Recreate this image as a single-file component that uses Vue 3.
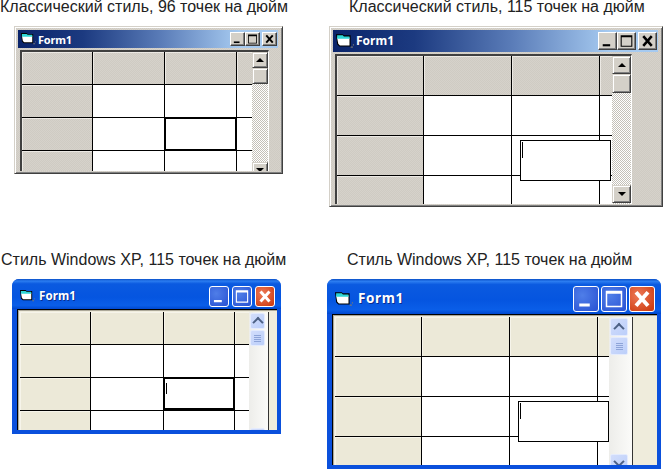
<script setup>
const windows = [
  { id: 'w1', kind: 'classic', caption: 'Классический стиль, 96 точек на дюйм',
    cols: [70, 71, 71, 15], rows: [32, 32, 32], spacer: 78,
    edit: { left: 142, top: 65, width: 73, height: 34 }, thick: true, caret: false },
  { id: 'w2', kind: 'classic', caption: 'Классический стиль, 115 точек на дюйм',
    cols: [86, 87, 87, 12], rows: [39, 39, 39], spacer: 92,
    edit: { left: 183, top: 84, width: 91, height: 41 }, thick: false, caret: true },
  { id: 'w3', kind: 'xp', caption: 'Стиль Windows XP, 115 точек на дюйм',
    cols: [70, 72, 70, 14], rows: [32, 32, 32], spacer: 81,
    edit: { left: 143, top: 65, width: 72, height: 33 }, thick: true, caret: true },
  { id: 'w4', kind: 'xp', caption: 'Стиль Windows XP, 115 точек на дюйм',
    cols: [86, 87, 87, 11], rows: [39, 39, 39], spacer: 98,
    edit: { left: 183, top: 84, width: 91, height: 41 }, thick: false, caret: true },
]

const cells = []
for (let r = 0; r < 4; r++) for (let c = 0; c < 4; c++) cells.push({ r, c, fixed: r === 0 || c === 0 })

const gridStyle = (w) => ({
  width: w.cols.reduce((a, b) => a + b, 0) + 3 + 'px',
  gridTemplateColumns: w.cols.map((v) => v + 'px').join(' '),
  gridTemplateRows: w.rows.map((v) => v + 'px').join(' ') + ' 1fr',
})
const editStyle = (w) => ({
  left: w.edit.left + 'px',
  top: w.edit.top + 'px',
  width: w.edit.width + 'px',
  height: w.edit.height + 'px',
})
</script>

<template>
  <div class="canvas">
    <section v-for="w in windows" :key="w.id" class="pane" :class="w.id">
      <p class="caption">{{ w.caption }}</p>
      <div class="win" :class="w.kind">
        <header class="title">
          <svg class="icon" viewBox="0 0 16 14">
            <path d="M13 12h2v1h-2zM15 10h1v1h-1z" fill="#777" />
            <path d="M0 1h6l1 1h6v10H3L1 10z" fill="#000" />
            <path d="M1 4h11v7H3.500L2 9.500z" fill="#fff" />
            <path d="M1 2h5l1 1h5v2H1z" fill="#2fd6d6" />
          </svg>
          <span class="name">Form1</span>
          <div class="ctrls">
            <button class="btn">
              <svg viewBox="0 0 16 14"><path d="M3.500 10h7v2h-7z" /></svg>
            </button>
            <button class="btn">
              <svg viewBox="0 0 16 14"><path fill-rule="evenodd" d="M2.500 1.500h11v11h-11zM3.500 3.500v8h9v-8z" /></svg>
            </button>
            <button class="btn close">
              <svg viewBox="0 0 16 14"><path d="M4 2.500L12 11.500M12 2.500L4 11.500" class="x" /></svg>
            </button>
          </div>
        </header>
        <div class="client">
          <div class="view">
            <div class="grid" :style="gridStyle(w)">
              <div v-for="cell in cells" :key="cell.r + '-' + cell.c" class="cell" :class="{ fixed: cell.fixed }"></div>
              <div class="edit" :class="{ thick: w.thick }" :style="editStyle(w)">
                <i v-if="w.caret" class="caret"></i>
              </div>
            </div>
            <div class="sb">
              <div class="sbtn"><span class="arrow up"></span></div>
              <div class="sbtn thumb"><span class="grip"></span></div>
              <div class="spacer" :style="{ height: w.spacer + 'px' }"></div>
              <div class="sbtn"><span class="arrow down"></span></div>
            </div>
          </div>
        </div>
      </div>
    </section>
  </div>
</template>

<style scoped>
.canvas {
  width: 663px;
  height: 469px;
  overflow: hidden;
  background: #fff;
  display: grid;
  grid-template-columns: 320px 343px;
  grid-template-rows: 253px 216px;
  font-family: "Liberation Sans", Arial, sans-serif;
}
.pane { display: flex; flex-direction: column; min-width: 0; }
.caption {
  margin: 0;
  height: 14px;
  line-height: 14px;
  font-size: 16px;
  color: #222;
  white-space: nowrap;
}
.w1 .caption { padding-left: 0; }
.w2 .caption { padding-left: 29px; }
.w3 .caption { padding-left: 1px; }
.w4 .caption { padding-left: 27px; }

.win {
  box-sizing: border-box;
  margin-top: 12px;
  display: flex;
  flex-direction: column;
  overflow: hidden;
}
.w1 .win { margin-left: 14px; width: 269px; height: 148px; --title: 18px; --bw: 15px; --bh: 14px; --sb: 16px; --sh: 16px; --fs: 11px; --ns: -0.2px; --ico: 15px; --nx: 2px; }
.w2 .win { margin-left: 9px; width: 334px; height: 181px; --title: 22px; --bw: 19px; --bh: 18px; --sb: 19px; --sh: 18px; --fs: 12px; --ns: 0; --ico: 18px; --nx: 2px; }
.w3 .win { margin-left: 12px; width: 269px; height: 155px; --title: 30px; --bw: 20px; --bh: 21px; --sb: 19px; --sh: 16px; --fs: 11.5px; --ns: 0.1px; --ico: 15px; --nx: 4px; }
.w4 .win { margin-left: 7px; width: 334px; height: 190px; --title: 35px; --bw: 26px; --bh: 26px; --sb: 23px; --sh: 18px; --fs: 13.5px; --ns: 0.6px; --ico: 18px; --nx: 5px; }

.title {
  box-sizing: border-box;
  height: var(--title);
  flex: none;
  display: flex;
  align-items: center;
  color: #fff;
}
.icon { width: var(--ico); height: calc(var(--ico) * 0.875); flex: none; }
.name {
  margin-left: var(--nx);
  font-family: "Noto Sans", "DejaVu Sans", sans-serif;
  font-weight: 700;
  font-size: var(--fs);
  letter-spacing: var(--ns);
  line-height: 1;
}
.ctrls { margin-left: auto; display: flex; }
.btn {
  box-sizing: border-box;
  width: var(--bw);
  height: var(--bh);
  padding: 0;
  display: block;
}
.btn svg { display: block; width: 100%; height: 100%; }
.x { fill: none; stroke-width: 2.4; }
.client { flex: 1; min-height: 0; display: flex; }
.view { display: flex; min-height: 0; flex: none; }
.grid {
  position: relative;
  flex: none;
  display: grid;
  gap: 1px;
  background: #000;
  overflow: hidden;
}
.cell { background: #fff; }
.edit {
  position: absolute;
  box-sizing: border-box;
  background: #fff;
  border: 1px solid #000;
}
.edit.thick { border-width: 2px; }
.caret { position: absolute; left: 1px; top: 1px; width: 1px; height: 16px; background: #000; }
.w3 .caret { top: 4px; height: 11px; }
.sb {
  box-sizing: border-box;
  flex: none;
  width: var(--sb);
  display: flex;
  flex-direction: column;
  overflow: hidden;
}
.sbtn {
  box-sizing: border-box;
  flex: none;
  height: var(--sh);
  display: flex;
  align-items: center;
  justify-content: center;
}
.w2 .thumb { height: 19px; }
.spacer { flex: none; }
.arrow { display: block; width: 0; height: 0; }

/* classic */
.classic {
  padding: 3px 4px 2px 3px;
  background: repeating-conic-gradient(#d6d2cb 0 25%, #cfcbc3 0 50%) 0 0 / 2px 2px;
  border: 1px solid;
  border-color: #d4d0c8 #404040 #404040 #d4d0c8;
  box-shadow: inset 1px 1px #fff, inset -1px -1px #808080;
}
.classic .title {
  padding: 0 1px 0 3px;
  background: linear-gradient(90deg, #0a246a, #1c3a80 25%, #5a7cb8 55%, #a6caf0 85%, #a6caf0);
}
.classic .btn {
  background: #d4d0c8;
  border: 1px solid;
  border-color: #fff #404040 #404040 #fff;
  box-shadow: inset -1px -1px #808080;
}
.classic .btn.close { margin-left: 2px; }
.classic .btn svg { fill: #000; }
.classic .x { stroke: #000; }
.classic .client { padding: 2px 0 0 2px; }
.classic .view {
  border-top: 2px solid #404040;
  border-left: 2px solid #404040;
  border-right: 1px solid #fff;
}
.classic .cell.fixed { background: repeating-conic-gradient(#d6d2cb 0 25%, #cfcbc3 0 50%) 0 0 / 2px 2px; box-shadow: inset 1px 1px #ece9e4; }
.classic .sb { background: repeating-conic-gradient(#fff 0 25%, #c4c0b8 0 50%) 0 0 / 2px 2px; }
.classic .sbtn {
  background: #d4d0c8;
  border: 1px solid;
  border-color: #d4d0c8 #404040 #404040 #d4d0c8;
  box-shadow: inset 1px 1px #fff, inset -1px -1px #808080;
}
.classic .arrow.up { border: 4px solid transparent; border-top: 0; border-bottom: 4px solid #000; }
.classic .arrow.down { border: 4px solid transparent; border-bottom: 0; border-top: 4px solid #000; }

/* xp */
.xp {
  background: #0a50dc;
  border-radius: 7px 7px 0 0;
}
.xp .title {
  padding: 4px 6px 0 8px;
  background: linear-gradient(180deg, #0a50c8 0, #2b7cf0 7%, #0b5ae0 16%, #0555e0 60%, #0a5ee8 88%, #0048d0 100%);
}
.xp .name { text-shadow: 1px 1px #0a2f90; }
.xp .ctrls { gap: 3px; }
.w4.pane .ctrls { gap: 2px; }
.xp .btn {
  border: 1px solid #fff;
  border-radius: 3px;
  background: radial-gradient(circle at 35% 35%, #4f7ee8, #2e58d6 85%);
}
.xp .btn svg { fill: #fff; }
.xp .x { stroke: #fff; stroke-width: 2.6; }
.xp .btn.close { background: radial-gradient(circle at 35% 35%, #ee7a58, #cf3f14 85%); }
.xp .client { padding: 0 4px 4px 5px; background: #0a50dc; }
.xp .view {
  flex: 1;
  padding: 2px 0 0 2px;
  border-top: 1px solid #000;
  border-left: 1px solid #000;
  background:
    linear-gradient(#aca899, #aca899) 0 0 / 100% 1px no-repeat,
    linear-gradient(#aca899, #aca899) 0 0 / 1px 100% no-repeat,
    #efecdc;
}
.xp .cell.fixed { background: #ece9d8; box-shadow: inset 1px 1px #f6f4ea; }
.xp .sb {
  background: linear-gradient(90deg, #ededea, #fbfbf9);
  padding: 1px 3px 0 1px;
  border-right: 1px solid #333;
  width: calc(var(--sb) + 1px);
}
.w4.pane .sb { padding-right: 4px; }
.xp .sbtn {
  border-radius: 2px;
  background: linear-gradient(135deg, #d2ddfb, #bccffa);
  border: 1px solid #e4ebfd;
  margin-bottom: 1px;
}
.xp .arrow.up, .xp .arrow.down {
  width: 6px;
  height: 6px;
  border: solid #4d6185;
  border-width: 2px 0 0 2px;
  transform: rotate(45deg) translate(1px, 1px);
}
.xp .arrow.down { transform: rotate(225deg) translate(1px, 1px); }
.xp .grip {
  display: block;
  width: 7px;
  height: 7px;
  background: repeating-linear-gradient(#8ea4d8 0 1px, transparent 1px 2px);
}
</style>
